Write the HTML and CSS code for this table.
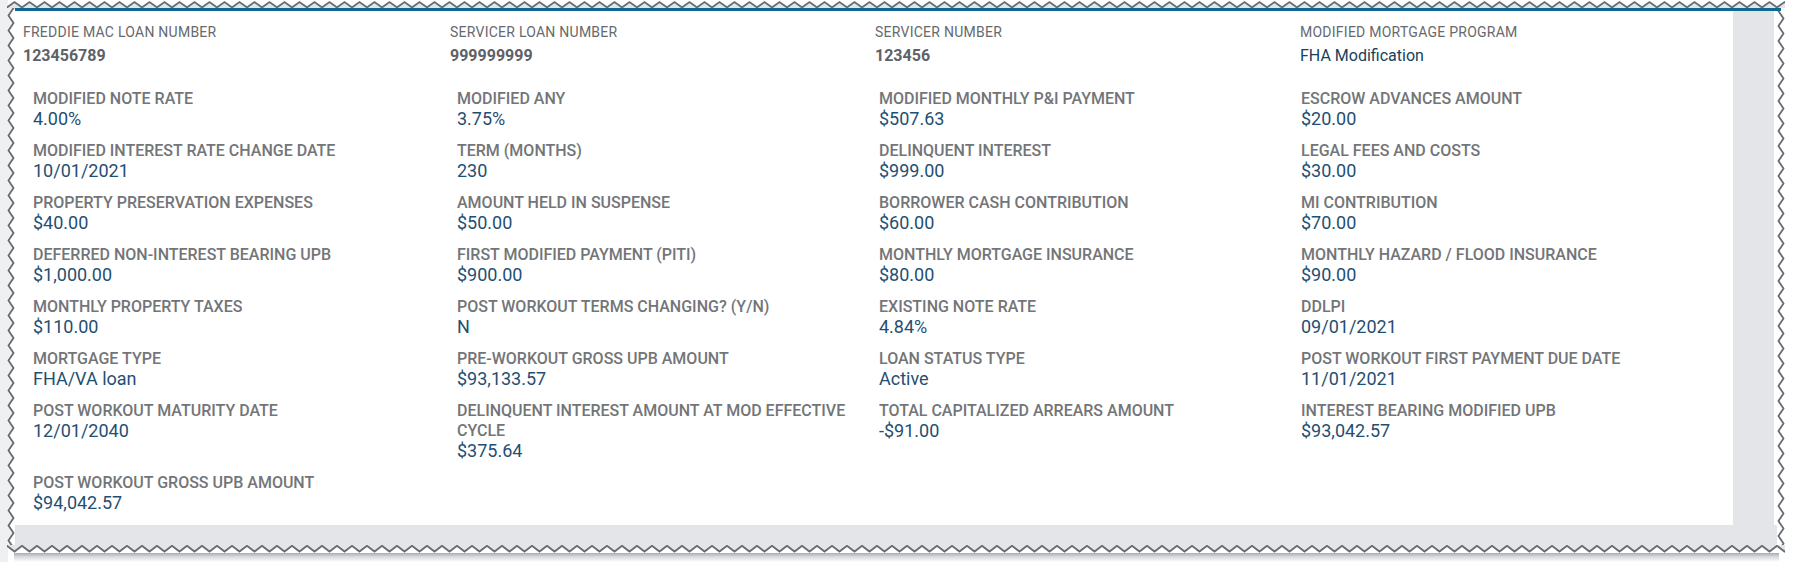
FILE: index.html
```html
<!DOCTYPE html>
<html>
<head>
<meta charset="utf-8">
<link rel="stylesheet" href="styles.css">
</head>
<body>
<div class="frame">
  <svg class="edge edge-top" aria-hidden="true">
    <defs>
      <pattern id="zt" width="15" height="8" patternUnits="userSpaceOnUse">
        <path d="M0 7.5 L7.5 2 L15 7.5 V8 H0 Z" fill="#e4e5e9"/>
        <path d="M-1 8.2 L7.5 2 L16 8.2" fill="none" stroke="#676c73" stroke-width="1.8"/>
      </pattern>
    </defs>
    <rect width="100%" height="100%" fill="url(#zt)"/>
  </svg>
  <div class="blue-bar"></div>
  <svg class="edge edge-left" aria-hidden="true">
    <defs>
      <pattern id="zl" width="8" height="15" patternUnits="userSpaceOnUse">
        <rect width="8" height="15" fill="#eef0f2"/>
        <path d="M8 0 H7 L1.5 7.5 L7 15 H8 Z" fill="#ffffff"/>
        <path d="M7.2 -1 L1.5 7.5 L7.2 16" fill="none" stroke="#676c73" stroke-width="1.8"/>
      </pattern>
    </defs>
    <rect width="100%" height="100%" fill="url(#zl)"/>
  </svg>
  <div class="middle">
    <section class="card">
      <div class="head-grid">
        <div class="head-field"><div class="head-label">FREDDIE MAC LOAN NUMBER</div><div class="head-value num">123456789</div></div>
        <div class="head-field"><div class="head-label">SERVICER LOAN NUMBER</div><div class="head-value num">999999999</div></div>
        <div class="head-field"><div class="head-label">SERVICER NUMBER</div><div class="head-value num">123456</div></div>
        <div class="head-field"><div class="head-label">MODIFIED MORTGAGE PROGRAM</div><div class="head-value text">FHA Modification</div></div>
      </div>
      <div class="field-grid">
        <div class="field"><div class="label">MODIFIED NOTE RATE</div><div class="value">4.00%</div></div>
        <div class="field"><div class="label">MODIFIED ANY</div><div class="value">3.75%</div></div>
        <div class="field"><div class="label">MODIFIED MONTHLY P&amp;I PAYMENT</div><div class="value">$507.63</div></div>
        <div class="field"><div class="label">ESCROW ADVANCES AMOUNT</div><div class="value">$20.00</div></div>

        <div class="field"><div class="label">MODIFIED INTEREST RATE CHANGE DATE</div><div class="value">10/01/2021</div></div>
        <div class="field"><div class="label">TERM (MONTHS)</div><div class="value">230</div></div>
        <div class="field"><div class="label">DELINQUENT INTEREST</div><div class="value">$999.00</div></div>
        <div class="field"><div class="label">LEGAL FEES AND COSTS</div><div class="value">$30.00</div></div>

        <div class="field"><div class="label">PROPERTY PRESERVATION EXPENSES</div><div class="value">$40.00</div></div>
        <div class="field"><div class="label">AMOUNT HELD IN SUSPENSE</div><div class="value">$50.00</div></div>
        <div class="field"><div class="label">BORROWER CASH CONTRIBUTION</div><div class="value">$60.00</div></div>
        <div class="field"><div class="label">MI CONTRIBUTION</div><div class="value">$70.00</div></div>

        <div class="field"><div class="label">DEFERRED NON-INTEREST BEARING UPB</div><div class="value">$1,000.00</div></div>
        <div class="field"><div class="label">FIRST MODIFIED PAYMENT (PITI)</div><div class="value">$900.00</div></div>
        <div class="field"><div class="label">MONTHLY MORTGAGE INSURANCE</div><div class="value">$80.00</div></div>
        <div class="field"><div class="label">MONTHLY HAZARD / FLOOD INSURANCE</div><div class="value">$90.00</div></div>

        <div class="field"><div class="label">MONTHLY PROPERTY TAXES</div><div class="value">$110.00</div></div>
        <div class="field"><div class="label">POST WORKOUT TERMS CHANGING? (Y/N)</div><div class="value">N</div></div>
        <div class="field"><div class="label">EXISTING NOTE RATE</div><div class="value">4.84%</div></div>
        <div class="field"><div class="label">DDLPI</div><div class="value">09/01/2021</div></div>

        <div class="field"><div class="label">MORTGAGE TYPE</div><div class="value">FHA/VA loan</div></div>
        <div class="field"><div class="label">PRE-WORKOUT GROSS UPB AMOUNT</div><div class="value">$93,133.57</div></div>
        <div class="field"><div class="label">LOAN STATUS TYPE</div><div class="value">Active</div></div>
        <div class="field"><div class="label">POST WORKOUT FIRST PAYMENT DUE DATE</div><div class="value">11/01/2021</div></div>

        <div class="field"><div class="label">POST WORKOUT MATURITY DATE</div><div class="value">12/01/2040</div></div>
        <div class="field"><div class="label">DELINQUENT INTEREST AMOUNT AT MOD EFFECTIVE CYCLE</div><div class="value">$375.64</div></div>
        <div class="field"><div class="label">TOTAL CAPITALIZED ARREARS AMOUNT</div><div class="value">-$91.00</div></div>
        <div class="field"><div class="label">INTEREST BEARING MODIFIED UPB</div><div class="value">$93,042.57</div></div>

        <div class="field"><div class="label">POST WORKOUT GROSS UPB AMOUNT</div><div class="value">$94,042.57</div></div>
      </div>
    </section>
    <div class="gutter"></div>
    <div class="strip"></div>
  </div>
  <svg class="edge edge-right" aria-hidden="true">
    <defs>
      <pattern id="zr" width="8" height="15" patternUnits="userSpaceOnUse">
        <rect width="8" height="15" fill="#ffffff"/>
        <path d="M0.8 -1 L6.5 7.5 L0.8 16" fill="none" stroke="#676c73" stroke-width="1.8"/>
      </pattern>
    </defs>
    <rect width="100%" height="100%" fill="url(#zr)"/>
  </svg>
  <div class="bottom-gray"></div>
  <svg class="edge edge-bottom" aria-hidden="true">
    <defs>
      <pattern id="zb" width="15" height="8" patternUnits="userSpaceOnUse">
        <path d="M0 0 H15 V0.8 L7.5 6.5 L0 0.8 Z" fill="#e4e5e9"/>
        <path d="M-1 0 L7.5 6.5 L16 0" fill="none" stroke="#676c73" stroke-width="1.8"/>
      </pattern>
    </defs>
    <rect width="100%" height="100%" fill="url(#zb)"/>
  </svg>
</div>
<div class="shadow"></div>
</body>
</html>
```
FILE: styles.css
```css
html, body {
  margin: 0;
  padding: 0;
  background: #ffffff;
}

body {
  width: 1795px;
  height: 562px;
  overflow: hidden;
  font-family: Roboto, "Liberation Sans", Arial, sans-serif;
  background: linear-gradient(to right, #eef0f2 0, #eef0f2 8px, #ffffff 8px);
}

.frame {
  margin-left: 7px;
  width: 1778px;
  display: grid;
  grid-template-columns: 8px 1762px 8px;
  grid-template-rows: 8px 3px 514px 20px 8px;
}

.edge {
  display: block;
  width: 100%;
  height: 100%;
}

.edge-top {
  grid-column: 1 / -1;
  grid-row: 1;
}

.blue-bar {
  grid-column: 2 / 4;
  grid-row: 2;
  background: #0f6891;
  margin-right: 4px;
}

.edge-left {
  grid-column: 1;
  grid-row: 2 / 5;
}

.edge-right {
  grid-column: 3;
  grid-row: 3 / 5;
}

.middle {
  grid-column: 2;
  grid-row: 3;
  display: flex;
}

.card {
  width: 1718px;
  background: #ffffff;
  box-sizing: border-box;
  padding: 12px 0 0 8px;
}

.gutter {
  width: 41px;
  background: #e4e5e9;
}

.strip {
  width: 3px;
  background: #ffffff;
}

.bottom-gray {
  grid-column: 2;
  grid-row: 4;
  background: #e4e5e9;
}

.edge-bottom {
  grid-column: 1 / -1;
  grid-row: 5;
}

.shadow {
  margin-left: 14px;
  width: 1765px;
  height: 9px;
  background: linear-gradient(to bottom, #a9acb1 0, #d6d8db 40%, #ffffff 100%);
}

/* header row */
.head-grid {
  display: grid;
  grid-template-columns: 427px 425px 425px 1fr;
}

.head-label {
  font-size: 14px;
  line-height: 18px;
  letter-spacing: 0.25px;
  color: #66696d;
}

.head-value {
  margin-top: 5px;
  line-height: 20px;
}

.head-value.num {
  font-size: 16px;
  font-weight: 700;
  color: #5e6268;
}

.head-value.text {
  font-size: 16px;
  color: #173f5e;
}

/* detail fields */
.field-grid {
  margin-top: 23px;
  margin-left: 10px;
  display: grid;
  grid-template-columns: 424px 422px 422px 1fr;
  row-gap: 12px;
}

.field {
  padding-right: 12px;
}

.label {
  font-size: 16px;
  font-weight: 500;
  line-height: 20px;
  color: #737578;
}

.value {
  font-size: 18px;
  line-height: 20px;
  color: #1f4f72;
}
```
